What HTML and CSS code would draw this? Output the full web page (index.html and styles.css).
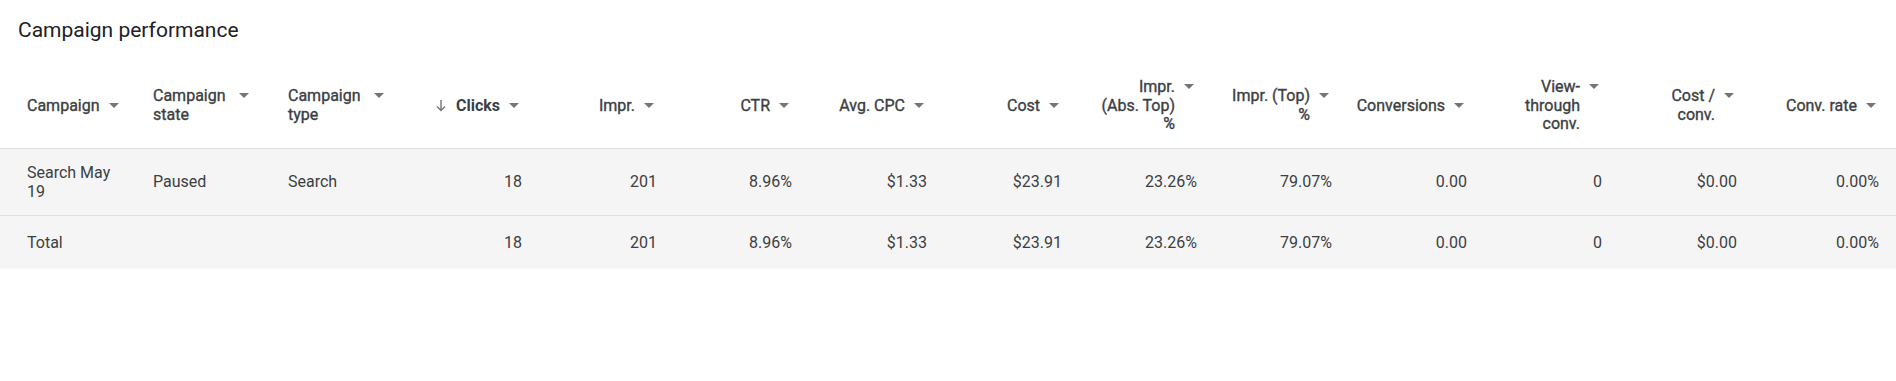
FILE: index.html
```html
<!DOCTYPE html>
<html lang="en">
<head>
<meta charset="utf-8">
<title>Campaign performance</title>
<link rel="stylesheet" href="styles.css">
</head>
<body>
<div class="card">
  <div class="title">Campaign performance</div>
  <table class="grid">
    <colgroup>
      <col class="col"><col class="col"><col class="col"><col class="col"><col class="col"><col class="col"><col class="col">
      <col class="col"><col class="col"><col class="col"><col class="col"><col class="col"><col class="col"><col class="col-last">
    </colgroup>
    <thead>
      <tr>
        <th class="first"><div class="h"><span class="t">Campaign</span><svg class="dd" viewBox="0 0 16 19" width="16" height="19"><path d="M3 6h10l-5 5z"/></svg></div></th>
        <th><div class="h"><span class="t">Campaign state</span><svg class="dd" viewBox="0 0 16 19" width="16" height="19"><path d="M3 6h10l-5 5z"/></svg></div></th>
        <th><div class="h"><span class="t">Campaign type</span><svg class="dd" viewBox="0 0 16 19" width="16" height="19"><path d="M3 6h10l-5 5z"/></svg></div></th>
        <th class="num sorted"><div class="h"><svg class="sort" viewBox="0 0 10 19" width="10" height="19"><path d="M5 3v10.5M1 9.5l4 4 4-4"/></svg><span class="t">Clicks</span><svg class="dd" viewBox="0 0 16 19" width="16" height="19"><path d="M3 6h10l-5 5z"/></svg></div></th>
        <th class="num"><div class="h"><span class="t">Impr.</span><svg class="dd" viewBox="0 0 16 19" width="16" height="19"><path d="M3 6h10l-5 5z"/></svg></div></th>
        <th class="num"><div class="h"><span class="t">CTR</span><svg class="dd" viewBox="0 0 16 19" width="16" height="19"><path d="M3 6h10l-5 5z"/></svg></div></th>
        <th class="num"><div class="h"><span class="t">Avg. CPC</span><svg class="dd" viewBox="0 0 16 19" width="16" height="19"><path d="M3 6h10l-5 5z"/></svg></div></th>
        <th class="num"><div class="h"><span class="t">Cost</span><svg class="dd" viewBox="0 0 16 19" width="16" height="19"><path d="M3 6h10l-5 5z"/></svg></div></th>
        <th class="num"><div class="h"><span class="t">Impr. (Abs. Top) %</span><svg class="dd" viewBox="0 0 16 19" width="16" height="19"><path d="M3 6h10l-5 5z"/></svg></div></th>
        <th class="num"><div class="h"><span class="t"><span class="nw">Impr. (Top)</span><br>%</span><svg class="dd" viewBox="0 0 16 19" width="16" height="19"><path d="M3 6h10l-5 5z"/></svg></div></th>
        <th class="num"><div class="h"><span class="t">Conversions</span><svg class="dd" viewBox="0 0 16 19" width="16" height="19"><path d="M3 6h10l-5 5z"/></svg></div></th>
        <th class="num"><div class="h"><span class="t">View-through conv.</span><svg class="dd" viewBox="0 0 16 19" width="16" height="19"><path d="M3 6h10l-5 5z"/></svg></div></th>
        <th class="num"><div class="h"><span class="t">Cost / conv.</span><svg class="dd" viewBox="0 0 16 19" width="16" height="19"><path d="M3 6h10l-5 5z"/></svg></div></th>
        <th class="num last"><div class="h"><span class="t">Conv. rate</span><svg class="dd" viewBox="0 0 16 19" width="16" height="19"><path d="M3 6h10l-5 5z"/></svg></div></th>
      </tr>
    </thead>
    <tbody>
      <tr class="row">
        <td class="first">Search May 19</td>
        <td>Paused</td>
        <td>Search</td>
        <td class="num">18</td>
        <td class="num">201</td>
        <td class="num">8.96%</td>
        <td class="num">$1.33</td>
        <td class="num">$23.91</td>
        <td class="num">23.26%</td>
        <td class="num">79.07%</td>
        <td class="num">0.00</td>
        <td class="num">0</td>
        <td class="num">$0.00</td>
        <td class="num last">0.00%</td>
      </tr>
    </tbody>
    <tfoot>
      <tr class="total">
        <td class="first">Total</td>
        <td></td>
        <td></td>
        <td class="num">18</td>
        <td class="num">201</td>
        <td class="num">8.96%</td>
        <td class="num">$1.33</td>
        <td class="num">$23.91</td>
        <td class="num">23.26%</td>
        <td class="num">79.07%</td>
        <td class="num">0.00</td>
        <td class="num">0</td>
        <td class="num">$0.00</td>
        <td class="num last">0.00%</td>
      </tr>
    </tfoot>
  </table>
</div>
</body>
</html>
```

FILE: styles.css
```css
html, body {
  margin: 0;
  padding: 0;
  background: #ffffff;
}

body {
  font-family: Roboto, "Liberation Sans", Arial, sans-serif;
  color: #3c4043;
  width: 1896px;
}

.title {
  box-sizing: border-box;
  height: 64px;
  padding: 18px 0 0 18px;
  font-size: 21px;
  line-height: 25px;
  font-weight: 400;
  color: #202124;
}

.grid {
  table-layout: fixed;
  width: 1896px;
  border-collapse: separate;
  border-spacing: 0;
  font-size: 16px;
}

.col { width: 135px; }
.col-last { width: 141px; }

.grid th,
.grid td {
  padding: 0 18px;
  vertical-align: middle;
  text-align: left;
  line-height: 18.75px;
}

.grid th.first,
.grid td.first { padding-left: 27px; }

.grid th.last,
.grid td.last { padding-right: 17px; }

.grid th {
  height: 84px;
  font-weight: 400;
  color: #3c4043;
  border-bottom: 1px solid #e0e0e0;
  -webkit-text-stroke: 0.35px currentColor;
}

.h {
  display: flex;
  align-items: flex-start;
  justify-content: flex-start;
}

.num .h { justify-content: flex-end; }

.num .t { text-align: right; }

.nw { white-space: nowrap; }

.dd {
  flex: none;
  margin-left: 6px;
  fill: #757575;
}

.sort {
  flex: none;
  margin-right: 10px;
  fill: none;
  stroke: #757575;
  stroke-width: 1.4;
}

.sorted { color: #202124; }
.sorted .t {
  font-weight: 700;
  -webkit-text-stroke: 0;
}

.grid td {
  background: #f5f5f5;
  color: #3c4043;
}

.grid td.num { text-align: right; }

.row td {
  height: 65px;
  padding-top: 1px;
  border-bottom: 1px solid #e0e0e0;
}

.total td {
  height: 52px;
  padding-top: 1px;
}
```
